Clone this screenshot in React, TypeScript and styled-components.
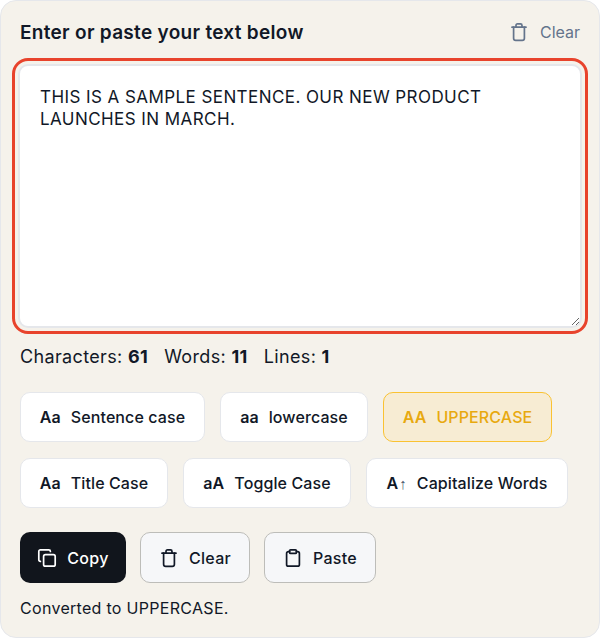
import React from 'react';
import styled, { createGlobalStyle } from 'styled-components';

const GlobalStyle = createGlobalStyle`
  html, body {
    margin: 0;
    padding: 0;
    background: #ffffff;
  }
  body {
    font-family: Inter, "Noto Sans", "Liberation Sans", sans-serif;
    color: #111827;
  }
`;

const Card = styled.section`
  box-sizing: border-box;
  width: 600px;
  height: 638px;
  padding: 19px 19px 0;
  background: #f5f2eb;
  border: 1px solid #e5e7eb;
  border-radius: 16px;
`;

const Header = styled.header`
  display: flex;
  align-items: center;
  justify-content: space-between;
  height: 24px;
  margin-bottom: 20px;
`;

const Title = styled.h2`
  margin: 0;
  font-size: 19px;
  font-weight: 600;
  letter-spacing: 0.3px;
  color: #111827;
`;

const GhostButton = styled.button`
  display: flex;
  align-items: center;
  gap: 11px;
  padding: 0;
  border: 0;
  background: none;
  font: inherit;
  font-size: 16px;
  color: #64748b;
`;

const Editor = styled.textarea`
  display: block;
  box-sizing: border-box;
  width: calc(100% + 4px);
  height: 264px;
  margin: 0 -2px;
  padding: 20px 20px;
  background: #ffffff;
  border: 2px solid #e5e7eb;
  border-radius: 10px;
  outline: 3px solid #e8432c;
  outline-offset: 3px;
  font-family: inherit;
  font-size: 17px;
  letter-spacing: 0.43px;
  line-height: 22px;
  color: #111827;
`;

const Stats = styled.p`
  display: flex;
  gap: 16px;
  margin: 18px 0 24px;
  font-size: 18px;
  letter-spacing: 0.35px;
  line-height: 22px;

  b {
    font-weight: 700;
  }
`;

const CaseRow = styled.div`
  display: flex;
  gap: 15px;
  margin-bottom: 16px;
`;

const CaseButton = styled.button<{ $active?: boolean; $width: number }>`
  box-sizing: border-box;
  display: flex;
  align-items: center;
  justify-content: center;
  gap: 10px;
  width: ${(p) => p.$width}px;
  height: 50px;
  padding: 0;
  background: ${(p) => (p.$active ? '#f7ecd3' : '#ffffff')};
  border: 1px solid ${(p) => (p.$active ? '#fac232' : '#e5e7eb')};
  border-radius: 10px;
  font-family: inherit;
  font-size: 16px;
  font-weight: 500;
  letter-spacing: 0.1px;
  color: ${(p) => (p.$active ? '#e8a90f' : '#111827')};
`;

const Glyph = styled.span`
  font-weight: 600;

  small {
    margin-left: 1px;
    font-family: "Liberation Sans", sans-serif;
    font-size: 15px;
    font-weight: 400;
    color: #475569;
  }
`;

const ActionRow = styled.div`
  display: flex;
  gap: 14px;
  margin-top: 24px;
`;

const ActionButton = styled.button<{ $primary?: boolean; $width: number }>`
  box-sizing: border-box;
  display: flex;
  align-items: center;
  justify-content: center;
  gap: 10px;
  width: ${(p) => p.$width}px;
  height: 51px;
  padding: 0;
  background: ${(p) => (p.$primary ? '#11151c' : '#f6f7f9')};
  border: ${(p) => (p.$primary ? '0' : '1px solid #bdbdb9')};
  border-radius: 10px;
  font-family: inherit;
  font-size: 16px;
  font-weight: 500;
  letter-spacing: 0.3px;
  color: ${(p) => (p.$primary ? '#ffffff' : '#111827')};
`;

const Status = styled.p`
  margin: 15px 0 0;
  font-size: 16px;
  letter-spacing: 0.3px;
  line-height: 20px;
`;

const Icon = styled.svg`
  width: 20px;
  height: 20px;
  fill: none;
  stroke: currentColor;
  stroke-width: 1.7;
  stroke-linecap: round;
  stroke-linejoin: round;
`;

const TrashIcon = () => (
  <Icon viewBox="0 0 20 20">
    <path d="M3 5.2h14" />
    <path d="M4.6 5.2v11c0 1.2.9 2.1 2.1 2.1h6.6c1.2 0 2.1-.9 2.1-2.1v-11" />
    <path d="M7 5.2V3.4c0-.9.6-1.6 1.5-1.6h3c.9 0 1.5.7 1.5 1.6v1.8" />
  </Icon>
);

const CopyIcon = () => (
  <Icon viewBox="0 0 20 20">
    <rect x="6.6" y="6.6" width="11.6" height="11.6" rx="1.8" />
    <path d="M3.4 13.4c-.9 0-1.6-.7-1.6-1.6V3.4c0-.9.7-1.6 1.6-1.6h8.4c.9 0 1.6.7 1.6 1.6" />
  </Icon>
);

const ClipboardIcon = () => (
  <Icon viewBox="0 0 20 20">
    <path d="M6.6 3.6H5.4c-1 0-1.8.8-1.8 1.8v11c0 1 .8 1.8 1.8 1.8h9.2c1 0 1.8-.8 1.8-1.8v-11c0-1-.8-1.8-1.8-1.8h-1.2" />
    <rect x="6.6" y="1.8" width="6.8" height="3.6" rx="1" />
  </Icon>
);

const App = () => {
  return (
    <Card>
      <GlobalStyle />
      <Header>
        <Title>Enter or paste your text below</Title>
        <GhostButton>
          <TrashIcon />
          Clear
        </GhostButton>
      </Header>
      <Editor
        readOnly
        value="THIS IS A SAMPLE SENTENCE. OUR NEW PRODUCT LAUNCHES IN MARCH."
      />
      <Stats>
        <span>
          Characters: <b>61</b>
        </span>
        <span>
          Words: <b>11</b>
        </span>
        <span>
          Lines: <b>1</b>
        </span>
      </Stats>
      <CaseRow>
        <CaseButton $width={185}>
          <Glyph>Aa</Glyph>Sentence case
        </CaseButton>
        <CaseButton $width={148}>
          <Glyph>aa</Glyph>lowercase
        </CaseButton>
        <CaseButton $width={169} $active>
          <Glyph>AA</Glyph>UPPERCASE
        </CaseButton>
      </CaseRow>
      <CaseRow>
        <CaseButton $width={148}>
          <Glyph>Aa</Glyph>Title Case
        </CaseButton>
        <CaseButton $width={168}>
          <Glyph>aA</Glyph>Toggle Case
        </CaseButton>
        <CaseButton $width={202}>
          <Glyph>
            A<small>↑</small>
          </Glyph>
          Capitalize Words
        </CaseButton>
      </CaseRow>
      <ActionRow>
        <ActionButton $width={106} $primary>
          <CopyIcon />
          Copy
        </ActionButton>
        <ActionButton $width={110}>
          <TrashIcon />
          Clear
        </ActionButton>
        <ActionButton $width={112}>
          <ClipboardIcon />
          Paste
        </ActionButton>
      </ActionRow>
      <Status>Converted to UPPERCASE.</Status>
    </Card>
  );
};

export default App;
